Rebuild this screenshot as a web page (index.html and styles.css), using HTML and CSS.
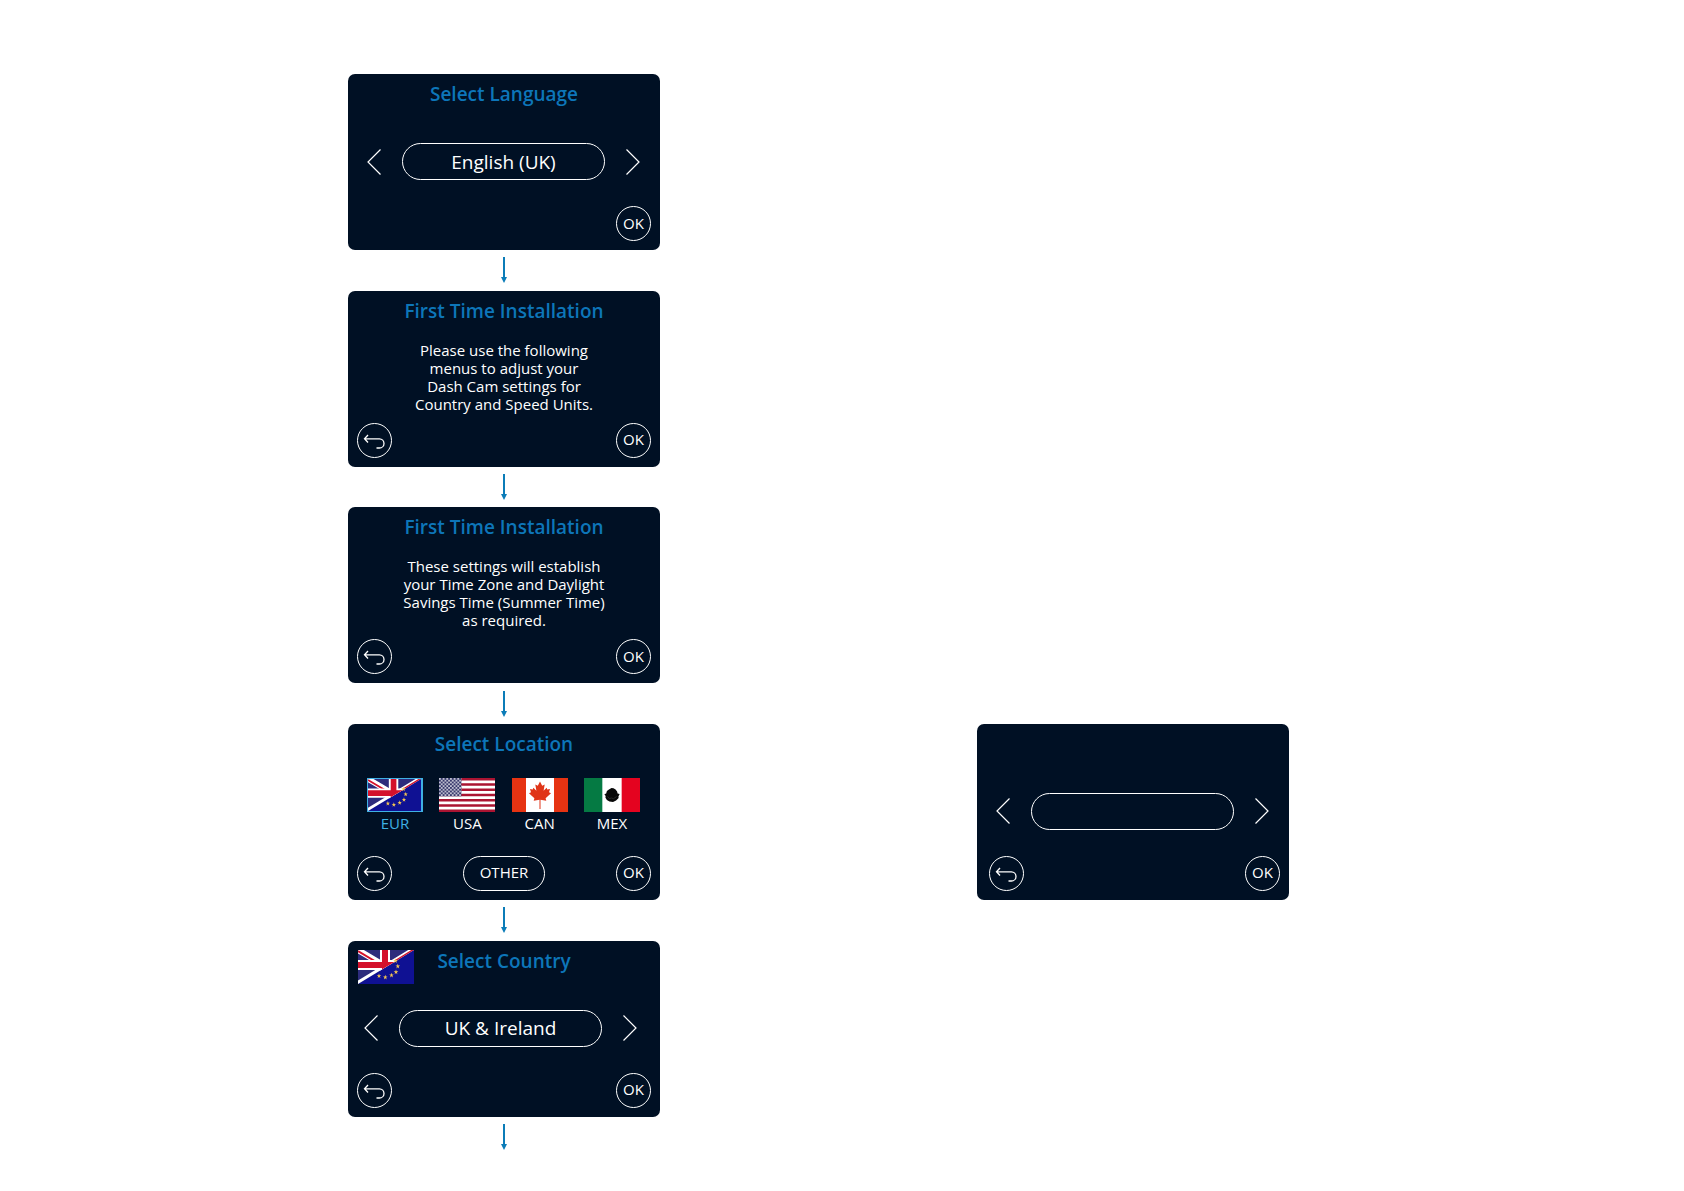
FILE: index.html
```html
<!DOCTYPE html>
<html lang="en">
<head>
    <meta charset="UTF-8">
    <meta name="viewport" content="width=device-width, initial-scale=1.0">
    <title>Dash Cam - First Time Installation</title>
    <link rel="stylesheet" href="styles.css">
</head>
<body>
    <!-- Shared icons and flags -->
    <svg class="sprites" aria-hidden="true">
        <symbol id="icon-prev" viewBox="0 0 14 26">
            <path d="M13.5 0.5 L1 13 L13.5 25.5" fill="none" stroke="#fff" stroke-width="1.2"/>
        </symbol>
        <symbol id="icon-next" viewBox="0 0 14 26">
            <path d="M0.5 0.5 L13 13 L0.5 25.5" fill="none" stroke="#fff" stroke-width="1.2"/>
        </symbol>
        <symbol id="icon-back" viewBox="0 0 35 35">
            <path d="M11 11 L7.5 14.8 L11 18.5 M7.5 14.8 H22.4 A4.6 4.6 0 0 1 22.4 24 H19.5" fill="none" stroke="#fff" stroke-width="1.3"/>
        </symbol>
        <symbol id="icon-arrow" viewBox="0 0 6 26">
            <path d="M2 0 H4 V20 H6 L3 26 L0 20 H2 Z" fill="#0b7cb8"/>
        </symbol>
        <symbol id="flag-eur" viewBox="0 0 56 34" preserveAspectRatio="none">
            <clipPath id="flag-eur-clip"><path d="M0 0 H56 L0 34 Z"/></clipPath>
            <rect width="56" height="34" fill="#0f1193"/>
            <g clip-path="url(#flag-eur-clip)">
                <rect width="56" height="34" fill="#2d2c7c"/>
                <path d="M0 0 L54 32 M0 34 L56 0" stroke="#fff" stroke-width="6"/>
                <path d="M0 1 L25 16 M30 15.5 L56 -0.5" stroke="#d4112b" stroke-width="2"/>
                <path d="M27 0 V34 M0 15 H56" stroke="#fff" stroke-width="10"/>
                <path d="M27 0 V34 M0 15 H56" stroke="#d4112b" stroke-width="6"/>
            </g>
            <g fill="#f3c552">
                <path id="star" d="M37.5 8.2 L38.1 10 L39.8 10 L38.4 11.1 L38.9 12.9 L37.5 11.8 L36.1 12.9 L36.6 11.1 L35.2 10 L36.9 10 Z"/>
                <use href="#star" x="2.3" y="5.5"/>
                <use href="#star" x="0.5" y="11.3"/>
                <use href="#star" x="-4" y="14.5"/>
                <use href="#star" x="-10.2" y="16.5"/>
                <use href="#star" x="-16.5" y="15.2"/>
            </g>
        </symbol>
        <symbol id="flag-usa" viewBox="0 0 55 34" preserveAspectRatio="none">
            <pattern id="stars" width="3.6" height="3.6" patternUnits="userSpaceOnUse">
                <circle cx="0.9" cy="0.9" r="0.8" fill="#fff"/>
                <circle cx="2.7" cy="2.7" r="0.8" fill="#fff"/>
            </pattern>
            <rect width="55" height="34" fill="#fff"/>
            <path d="M0 1.31 H55 M0 6.54 H55 M0 11.77 H55 M0 17 H55 M0 22.23 H55 M0 27.46 H55 M0 32.69 H55" stroke="#ab1432" stroke-width="2.62"/>
            <rect width="22" height="18.3" fill="#383a6d"/>
            <rect width="22" height="18.3" fill="url(#stars)"/>
        </symbol>
        <symbol id="flag-can" viewBox="0 0 56 34" preserveAspectRatio="none">
            <rect width="56" height="34" fill="#fff"/>
            <path d="M0 0 H14 V34 H0 Z M42 0 H56 V34 H42 Z" fill="#e63312"/>
            <path d="M28 3.5 L30.2 7.7 L32.7 6.5 L31.6 12.8 L34.6 9.8 L35.3 11.5 L38 11.1 L37 14.3 L39 15.3 L33.6 20.2 L34.3 22.7 L28.5 21.8 V31 H27.5 V21.8 L21.7 22.7 L22.4 20.2 L17 15.3 L19 14.3 L18 11.1 L20.7 11.5 L21.4 9.8 L24.4 12.8 L23.3 6.5 L25.8 7.7 Z" fill="#e03518"/>
        </symbol>
        <symbol id="flag-mex" viewBox="0 0 55 34" preserveAspectRatio="none">
            <rect width="55" height="34" fill="#fff"/>
            <rect width="18" height="34" fill="#057a43"/>
            <rect x="37" width="18" height="34" fill="#e4031f"/>
            <path d="M27 10 L29 10.3 L31 11.5 L32.5 13.5 L33 15.5 L35 16 L33.8 18.5 L34 20 L31.5 22.5 L28.5 24 L25 23.5 L22.5 22 L21 19.5 L21.3 18 L20 16.2 L21.8 15.5 L22.5 13 L24.5 11.5 Z" fill="#080808"/>
            <path d="M23 18.5 L25 20.5 L27 20 L29 20.7 L32 18.5" fill="none" stroke="#444" stroke-width="0.5"/>
        </symbol>
    </svg>

    <main class="flow">
        <!-- Language -->
        <section class="screen">
            <header class="screen-header"><h2>Select Language</h2></header>
            <div class="selector">
                <button class="chevron" aria-label="Previous"><svg><use href="#icon-prev"/></svg></button>
                <button class="value">English (UK)</button>
                <button class="chevron" aria-label="Next"><svg><use href="#icon-next"/></svg></button>
            </div>
            <footer class="actions">
                <button class="round ok">OK</button>
            </footer>
        </section>
        <svg class="arrow"><use href="#icon-arrow"/></svg>

        <!-- Installation info -->
        <section class="screen">
            <header class="screen-header"><h2>First Time Installation</h2></header>
            <p class="message">Please use the following<br>menus to adjust your<br>Dash Cam settings for<br>Country and Speed Units.</p>
            <footer class="actions">
                <button class="round" aria-label="Back"><svg><use href="#icon-back"/></svg></button>
                <button class="round ok">OK</button>
            </footer>
        </section>
        <svg class="arrow"><use href="#icon-arrow"/></svg>

        <section class="screen">
            <header class="screen-header"><h2>First Time Installation</h2></header>
            <p class="message">These settings will establish<br>your Time Zone and Daylight<br>Savings Time (Summer Time)<br>as required.</p>
            <footer class="actions">
                <button class="round" aria-label="Back"><svg><use href="#icon-back"/></svg></button>
                <button class="round ok">OK</button>
            </footer>
        </section>
        <svg class="arrow"><use href="#icon-arrow"/></svg>

        <!-- Location -->
        <section class="screen">
            <header class="screen-header"><h2>Select Location</h2></header>
            <div class="locations">
                <button class="location selected"><svg class="flag"><use href="#flag-eur"/></svg>EUR</button>
                <button class="location"><svg class="flag"><use href="#flag-usa"/></svg>USA</button>
                <button class="location"><svg class="flag"><use href="#flag-can"/></svg>CAN</button>
                <button class="location"><svg class="flag"><use href="#flag-mex"/></svg>MEX</button>
            </div>
            <footer class="actions">
                <button class="round" aria-label="Back"><svg><use href="#icon-back"/></svg></button>
                <button class="other">OTHER</button>
                <button class="round ok">OK</button>
            </footer>
        </section>

        <!-- Empty selector, beside the location screen -->
        <section class="screen screen-side">
            <header class="screen-header"></header>
            <div class="selector">
                <button class="chevron" aria-label="Previous"><svg><use href="#icon-prev"/></svg></button>
                <button class="value" aria-label="Value"></button>
                <button class="chevron" aria-label="Next"><svg><use href="#icon-next"/></svg></button>
            </div>
            <footer class="actions">
                <button class="round" aria-label="Back"><svg><use href="#icon-back"/></svg></button>
                <button class="round ok">OK</button>
            </footer>
        </section>
        <svg class="arrow"><use href="#icon-arrow"/></svg>

        <!-- Country -->
        <section class="screen screen-country">
            <header class="screen-header">
                <svg class="flag"><use href="#flag-eur"/></svg>
                <h2>Select Country</h2>
            </header>
            <div class="selector">
                <button class="chevron" aria-label="Previous"><svg><use href="#icon-prev"/></svg></button>
                <button class="value">UK &amp; Ireland</button>
                <button class="chevron" aria-label="Next"><svg><use href="#icon-next"/></svg></button>
            </div>
            <footer class="actions">
                <button class="round" aria-label="Back"><svg><use href="#icon-back"/></svg></button>
                <button class="round ok">OK</button>
            </footer>
        </section>
        <svg class="arrow"><use href="#icon-arrow"/></svg>
    </main>
</body>
</html>
```

FILE: styles.css
```css
* {
    box-sizing: border-box;
}
body {
    margin: 0;
    background-color: #fff;
    font-family: "Open Sans", "Noto Sans", sans-serif;
    color: #fff;
}
.sprites {
    position: absolute;
    width: 0;
    height: 0;
}
.flow {
    display: grid;
    grid-template-columns: 348fr 312px 317fr 312px 395fr;
    align-content: space-between;
    min-height: 100vh;
    padding: 74px 0 41px;
}
.screen {
    grid-column: 2;
    display: flex;
    flex-direction: column;
    min-height: 176px;
    padding: 8px 9px 9px;
    background-color: #001024;
    border-radius: 7px;
}
.screen-side {
    grid-column: 4;
    grid-row: 7;
    padding-left: 12px;
}
.arrow {
    grid-column: 2;
    justify-self: center;
    width: 6px;
    height: 26px;
}
.screen-header {
    display: grid;
    grid-template-columns: 58px 1fr 58px;
    height: 24px;
}
.screen-header h2 {
    grid-column: 2;
    margin: 0 -20px;
    font-size: 19px;
    font-weight: 600;
    line-height: 24px;
    text-align: center;
    color: #0d76b9;
}
.message {
    margin: 18px 0 0;
    font-size: 15px;
    line-height: 18px;
    text-align: center;
}
button {
    padding: 0;
    background: none;
    border: none;
    color: #fff;
    font-family: inherit;
    cursor: pointer;
}
button svg {
    display: block;
}

/* Value selector */
.selector {
    display: flex;
    justify-content: center;
    gap: 21px;
    margin: 37px 1px 0 0;
}
.screen-side .selector {
    margin-left: -3px;
}
.screen-country .selector {
    margin-right: 7px;
}
.chevron svg {
    width: 14px;
    height: 26px;
}
.value {
    width: 203px;
    height: 37px;
    border: 1px solid #fff;
    border-radius: 19px;
    font-size: 19px;
    line-height: 24px;
}

/* Flags */
.flag {
    width: 56px;
    height: 34px;
}
.screen-header .flag {
    margin: 1px;
}
.locations {
    display: flex;
    justify-content: space-between;
    margin: 22px 11px 0 10px;
}
.location {
    font-size: 15px;
    line-height: 23px;
}
.location.selected {
    color: #3fb0e4;
}
.location.selected .flag {
    border: 1px solid #3fb0e4;
    border-right-width: 2px;
}

/* Bottom buttons */
.actions {
    display: flex;
    justify-content: space-between;
    margin-top: auto;
}
.round,
.other {
    height: 35px;
    padding-bottom: 2px;
    border: 1px solid #fff;
    border-radius: 18px;
    font-size: 15px;
}
.round {
    width: 35px;
}
.round svg {
    width: 35px;
    height: 35px;
    margin: 0 -1px -2px;
}
.other {
    width: 82px;
    margin-left: auto;
}
.ok {
    margin-left: auto;
}
```
